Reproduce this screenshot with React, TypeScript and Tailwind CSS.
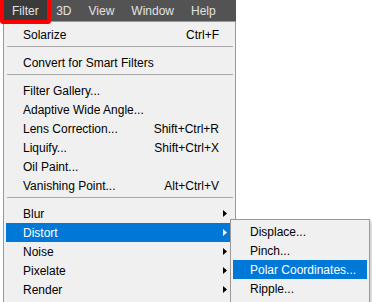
import React from "react";

type Item =
  | { kind: "sep" }
  | { kind: "item"; label: string; shortcut?: string; sub?: boolean; active?: boolean };

const BAR_ITEMS = ["Filter", "3D", "View", "Window", "Help"];

const FILTER_MENU: Item[] = [
  { kind: "item", label: "Solarize", shortcut: "Ctrl+F" },
  { kind: "sep" },
  { kind: "item", label: "Convert for Smart Filters" },
  { kind: "sep" },
  { kind: "item", label: "Filter Gallery..." },
  { kind: "item", label: "Adaptive Wide Angle..." },
  { kind: "item", label: "Lens Correction...", shortcut: "Shift+Ctrl+R" },
  { kind: "item", label: "Liquify...", shortcut: "Shift+Ctrl+X" },
  { kind: "item", label: "Oil Paint..." },
  { kind: "item", label: "Vanishing Point...", shortcut: "Alt+Ctrl+V" },
  { kind: "sep" },
  { kind: "item", label: "Blur", sub: true },
  { kind: "item", label: "Distort", sub: true, active: true },
  { kind: "item", label: "Noise", sub: true },
  { kind: "item", label: "Pixelate", sub: true },
  { kind: "item", label: "Render", sub: true },
];

const DISTORT_MENU = ["Displace...", "Pinch...", "Polar Coordinates...", "Ripple..."];

function Arrow({ light }: { light?: boolean }) {
  return (
    <svg width="4" height="7" viewBox="0 0 4 7" className="block">
      <polygon points="0,0 4,3.5 0,7" fill={light ? "#ffffff" : "#000000"} />
    </svg>
  );
}

function MenuRow({ item }: { item: Item }) {
  if (item.kind === "sep") {
    return (
      <div className="pt-[2px] pb-[6px] pl-[1px]">
        <div className="h-px bg-[#a8a8a8]" />
      </div>
    );
  }
  return (
    <div
      className={`flex h-[19px] items-center pl-[17px] ${
        item.active ? "bg-[#0078d7] text-white" : "text-black"
      }`}
    >
      <span className="flex-1 whitespace-nowrap">{item.label}</span>
      {item.shortcut && <span className="pr-[14px] whitespace-nowrap">{item.shortcut}</span>}
      {item.sub && (
        <span className="pr-[6px]">
          <Arrow light={item.active} />
        </span>
      )}
    </div>
  );
}

export default function App() {
  return (
    <div
      className="relative h-[302px] w-[372px] overflow-hidden bg-white text-[12px] leading-none"
      style={{ fontFamily: '"Liberation Sans", Arial, sans-serif' }}
    >
      {/* menu bar */}
      <div className="flex h-[21px] w-[236px] items-center bg-[#535353] pl-[3px] text-[#e2e2e2]">
        {BAR_ITEMS.map((label, i) => (
          <div
            key={label}
            className={`flex h-full items-center ${i === 0 ? "bg-[#3a3a3a] px-[9px]" : "px-[8.5px]"}`}
          >
            {label}
          </div>
        ))}
      </div>

      {/* filter dropdown */}
      <div className="ml-[3px] w-[233px] border border-[#999999] bg-[#f0f0f0] px-[2px] pt-[3px] pb-[6px]">
        {FILTER_MENU.map((item, i) => (
          <MenuRow key={i} item={item} />
        ))}
      </div>

      {/* distort submenu */}
      <div className="absolute left-[230px] top-[219px] w-[140px] border border-[#999999] bg-[#f0f0f0] px-[2px] pt-[2px] pb-[6px] shadow-[2px_2px_3px_rgba(0,0,0,0.2)]">
        {DISTORT_MENU.map((label, i) => (
          <MenuRow key={label} item={{ kind: "item", label, active: i === 2 }} />
        ))}
      </div>

      {/* red annotation box around Filter */}
      <div className="pointer-events-none absolute left-0 top-[-4px] h-[28px] w-[51px] rounded-[3px] border-[4px] border-[#ff0000]" />
    </div>
  );
}
